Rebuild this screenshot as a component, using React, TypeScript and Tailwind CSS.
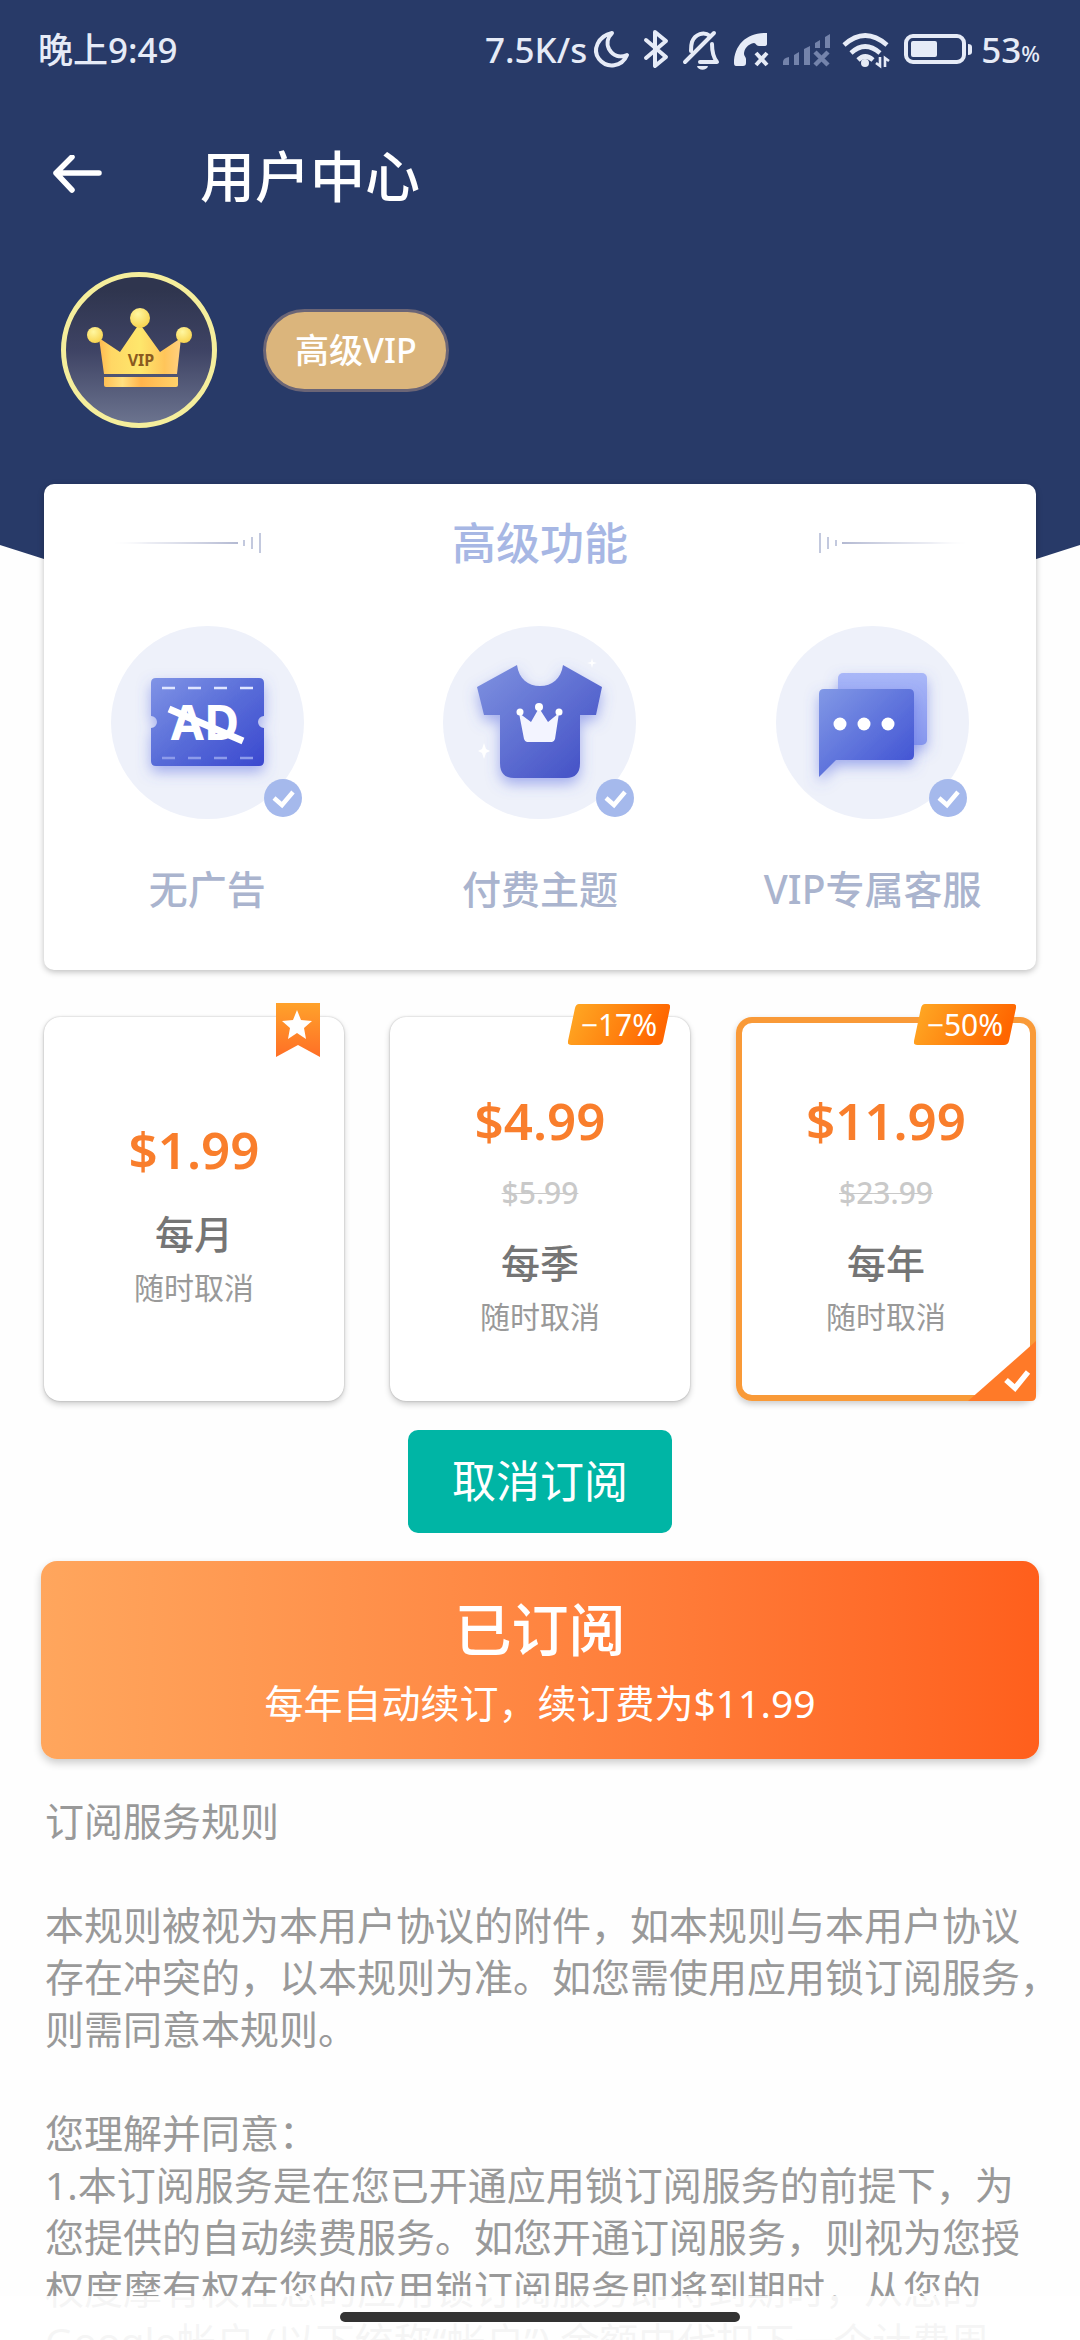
import type { ReactNode } from "react";

type Plan = {
  id: string;
  price: string;
  original?: string;
  name: string;
  discount?: string;
};

const plans: Plan[] = [
  { id: "month", price: "$1.99", name: "每月" },
  { id: "quarter", price: "$4.99", original: "$5.99", name: "每季", discount: "−17%" },
  { id: "year", price: "$11.99", original: "$23.99", name: "每年", discount: "−50%" },
];

function StatusIcons() {
  return (
    <svg className="mr-1.5 ml-1 h-14 w-[384px]" viewBox="590 20 384 56" fill="none" aria-hidden="true">
      <g stroke="#e6ebf7" strokeWidth="4" strokeLinecap="round" strokeLinejoin="round">
        {/* moon */}
        <path d="M611 32C597 35 591 49 598 58c8 10 23 8 28-4-7 3-14 1-18-6-3-6-1-12 3-16z" />
        {/* bluetooth */}
        <path d="M645 39l20 17-11 9V31l11 9-20 17" />
        {/* muted bell */}
        <path d="M684 61l29-29M690 50c0-3 0-6 1-9 3-8 12-11 18-6M711 43c0 8 1 13 5 18H699" />
      </g>
      <path d="M696 65h11c-1 5-10 5-11 0z" fill="#e6ebf7" />
      {/* missed call */}
      <path
        d="M766 32v11q0 2-3 2h-5c-3 0-3-3-5-3-6 1-10 6-10 11 0 2 2 3 2 5v4q0 3-3 3h-7q-2 0-2-3c0-18 13-31 33-30z"
        fill="#e6ebf7"
      />
      <path d="M755 52l11 12m0-12l-11 12" stroke="#e6ebf7" strokeWidth="4" />
      {/* no signal */}
      <path
        d="M782 64v-3q0-4 6-5v8zM793 64V54l5-3v13zM803 64V48l6-3v19zM814 47v-5l5-3v8zM824 47V36l5-3v14z"
        fill="#7483ab"
      />
      <path d="M814 51l13 13m0-13l-13 13" stroke="#7483ab" strokeWidth="4.5" />
      {/* wifi */}
      <path d="M843 44q21-19 43 0M850 52q14-13 29 0M857 59q7-7 15 0" stroke="#e6ebf7" strokeWidth="4.6" />
      <circle cx="864" cy="62" r="4" fill="#e6ebf7" />
      <path d="M879 56v9l-4-3M884 66v-9l4 3" stroke="#e6ebf7" strokeWidth="2.6" />
      {/* battery */}
      <rect x="905" y="35" width="58" height="26" rx="7" stroke="#e6ebf7" strokeWidth="4" />
      <rect x="910" y="40" width="26" height="16" rx="2" fill="#e6ebf7" />
      <path d="M967 43q4 0 4 3v5q0 3-4 3z" fill="#e6ebf7" />
    </svg>
  );
}

function StatusBar() {
  return (
    <div className="flex h-[98px] items-center justify-between pl-[38px] pr-10 text-[35px] leading-none font-medium text-[#e6ebf7]">
      <span>晚上9:49</span>
      <div className="flex items-center">
        <span>7.5K/s</span>
        <StatusIcons />
        <span>53</span>
        <span className="mt-2 text-[22px]">%</span>
      </div>
    </div>
  );
}

function CrownAvatar() {
  return (
    <svg className="size-[156px]" viewBox="0 0 156 156" role="img" aria-label="VIP">
      <defs>
        <linearGradient id="avatar-bg" x1="0" y1="0" x2="0" y2="1">
          <stop offset="0.1" stopColor="#2f354e" />
          <stop offset="0.5" stopColor="#3e4364" />
          <stop offset="1" stopColor="#6d7590" />
        </linearGradient>
        <linearGradient id="gold" x1="0" y1="0" x2="1" y2="0">
          <stop offset="0" stopColor="#ffb850" />
          <stop offset="0.15" stopColor="#ffd765" />
          <stop offset="0.5" stopColor="#fee76c" />
          <stop offset="0.8" stopColor="#ffc55a" />
          <stop offset="1" stopColor="#ffd080" />
        </linearGradient>
        <linearGradient id="gold-band" x1="0" y1="0" x2="1" y2="0">
          <stop offset="0" stopColor="#ffc055" />
          <stop offset="0.25" stopColor="#ffe080" />
          <stop offset="0.5" stopColor="#ffb44c" />
          <stop offset="1" stopColor="#ffd26a" />
        </linearGradient>
        <radialGradient id="pearl" cx="0.4" cy="0.3" r="0.8">
          <stop offset="0" stopColor="#fff7a0" />
          <stop offset="1" stopColor="#f7cf45" />
        </radialGradient>
      </defs>
      <circle cx="78" cy="78" r="75.5" fill="url(#avatar-bg)" stroke="#f5ee9c" strokeWidth="5" />
      <path d="M38 66l21 14 17-25h5l18 25 21-14-4 36H43z" fill="url(#gold)" />
      <path d="M43 105h74v8q0 2-2 2H45q-2 0-2-2z" fill="url(#gold-band)" />
      <circle cx="79" cy="46" r="10" fill="url(#pearl)" />
      <circle cx="34" cy="63" r="8" fill="url(#pearl)" />
      <circle cx="123" cy="63" r="8" fill="url(#pearl)" />
      <text x="80" y="94" textAnchor="middle" fontSize="16" fontWeight="700" fill="#8a5a20">
        VIP
      </text>
    </svg>
  );
}

function TitleRule({ flip = false }: { flip?: boolean }) {
  return (
    <svg className={flip ? "h-5 w-[152px] -scale-x-100" : "h-5 w-[152px]"} viewBox="0 0 152 20" aria-hidden="true">
      <defs>
        <linearGradient id="rule" x1="0" y1="0" x2="1" y2="0">
          <stop offset="0" stopColor="#c3c7dc" stopOpacity="0.1" />
          <stop offset="0.3" stopColor="#c3c7dc" />
          <stop offset="1" stopColor="#b3b9d2" />
        </linearGradient>
      </defs>
      <path d="M0 10l128-1v2z" fill="url(#rule)" />
      <path d="M134 7v6M142 4v12M150 0v20" stroke="#c3c9de" strokeWidth="2" />
    </svg>
  );
}

function AdIcon() {
  return (
    <svg className="size-[193px]" viewBox="0 0 193 193" aria-hidden="true">
      <defs>
        <linearGradient id="ad" x1="0" y1="0" x2="1" y2="1">
          <stop offset="0" stopColor="#8094e6" />
          <stop offset="0.5" stopColor="#586cd8" />
          <stop offset="1" stopColor="#3a48cf" />
        </linearGradient>
        <filter id="glow" x="-30%" y="-30%" width="160%" height="170%">
          <feDropShadow dx="0" dy="6" stdDeviation="7" floodColor="#5468e0" floodOpacity="0.5" />
        </filter>
      </defs>
      <path
        filter="url(#glow)"
        fill="url(#ad)"
        d="M45 52h103q5 0 5 5v33a6 6 0 0 0 0 12v33q0 5-5 5H45q-5 0-5-5v-33a6 6 0 0 0 0-12V57q0-5 5-5z"
      />
      <path d="M51 62h13m13 0h13m13 0h13m13 0h13" stroke="#dfe5ff" strokeWidth="2.5" />
      <path d="M51 132h13m13 0h13m13 0h13m13 0h13" stroke="#8d9bea" strokeWidth="2.5" />
      <text x="94" y="114" textAnchor="middle" fontSize="48" fontWeight="700" fill="#fff">
        AD
      </text>
      <path d="M58 83l74 32" stroke="#fff" strokeWidth="7" />
    </svg>
  );
}

function ShirtIcon() {
  return (
    <svg className="size-[193px]" viewBox="0 0 193 193" aria-hidden="true">
      <defs>
        <linearGradient id="shirt" x1="0" y1="0" x2="1" y2="1">
          <stop offset="0" stopColor="#7f92e0" />
          <stop offset="1" stopColor="#3f4cc4" />
        </linearGradient>
      </defs>
      <path
        filter="url(#glow)"
        fill="url(#shirt)"
        d="M74 39c2 14 11 21 23 21s21-7 23-21l39 22-6 28h-16v48q0 15-14 15H71q-14 0-14-15V89H41l-7-28z"
      />
      <path d="M76 87l12 9 8-14 9 14 11-9-4 26q-1 3-3 3H84q-2 0-3-3z" fill="#f3f4ff" />
      <circle cx="77" cy="86" r="3.5" fill="#fff" />
      <circle cx="96" cy="81" r="4" fill="#fff" />
      <circle cx="116" cy="86" r="3.5" fill="#fff" />
      <path
        d="M41 117l2 6 4 2-4 2-2 6-2-6-4-2 4-2zM149 32l1 4 4 1-4 1-1 4-1-4-4-1 4-1z"
        fill="#fff"
      />
    </svg>
  );
}

function ChatIcon() {
  return (
    <svg className="size-[193px]" viewBox="0 0 193 193" aria-hidden="true">
      <defs>
        <linearGradient id="chat" x1="0" y1="0" x2="1" y2="1">
          <stop offset="0" stopColor="#8299e6" />
          <stop offset="1" stopColor="#3c4ed2" />
        </linearGradient>
        <linearGradient id="chat-back" x1="0" y1="0" x2="0" y2="1">
          <stop offset="0" stopColor="#a9b7f8" />
          <stop offset="1" stopColor="#8797ee" />
        </linearGradient>
      </defs>
      <rect filter="url(#glow)" x="62" y="47" width="89" height="72" rx="5" fill="url(#chat-back)" />
      <path filter="url(#glow)" d="M48 63h85q5 0 5 5v61q0 5-5 5H60l-17 17V68q0-5 5-5z" fill="url(#chat)" />
      <circle cx="64" cy="98" r="6.5" fill="#fff" />
      <circle cx="88" cy="98" r="6.5" fill="#fff" />
      <circle cx="112" cy="98" r="6.5" fill="#fff" />
    </svg>
  );
}

function Feature({ icon, label }: { icon: ReactNode; label: string }) {
  return (
    <li className="flex flex-col items-center gap-10">
      <div className="relative rounded-full bg-[#eef1fa]">
        {icon}
        <svg className="absolute right-0.5 bottom-0.5 size-[38px]" viewBox="0 0 38 38" aria-hidden="true">
          <circle cx="19" cy="19" r="19" fill="#a5b9ec" />
          <path d="M10 19l8 7 11-13" fill="none" stroke="#fff" strokeWidth="4.5" />
        </svg>
      </div>
      <span className="text-[39px] leading-[60px] font-medium text-[#aab4ce]">{label}</span>
    </li>
  );
}

function DiscountTag({ children }: { children: ReactNode }) {
  return (
    <span className="absolute -top-[13px] right-5 flex h-[41px] w-[102px] items-center justify-center">
      <svg className="absolute inset-0 size-full" viewBox="0 0 102 41" aria-hidden="true">
        <defs>
          <linearGradient id="tag" x1="0" y1="0" x2="1" y2="0.2">
            <stop offset="0" stopColor="#ffab25" />
            <stop offset="1" stopColor="#ff6600" />
          </linearGradient>
        </defs>
        <path d="M11 0h88q4 0 3 4l-7 33q-1 4-5 4H3q-4 0-3-4L7 4q1-4 4-4z" fill="url(#tag)" />
      </svg>
      <span className="relative text-[30px] leading-none text-white">{children}</span>
    </span>
  );
}

function PlanCard({ plan, selected }: { plan: Plan; selected: boolean }) {
  return (
    <button
      type="button"
      aria-pressed={selected}
      className={
        selected
          ? "relative flex h-96 flex-col items-center justify-center rounded-2xl bg-white pt-2 shadow-[0_3px_6px_rgba(0,0,0,0.2)] inset-ring-6 inset-ring-[#f99a38]"
          : "relative flex h-96 flex-col items-center justify-center rounded-2xl bg-white pt-2 shadow-[0_3px_6px_rgba(0,0,0,0.2),0_0_2px_rgba(0,0,0,0.25)]"
      }
    >
      <span className="text-[51px] leading-[70px] font-semibold text-[#f97e2c]">{plan.price}</span>
      {plan.original && (
        <s className="mt-[18px] text-[30px] leading-10 font-medium text-[#c9c9c9] decoration-1">{plan.original}</s>
      )}
      <span className="mt-5 text-[39px] leading-[60px] font-medium text-[#757575]">{plan.name}</span>
      <span className="text-[30px] leading-[48px] text-[#999]">随时取消</span>

      {plan.discount ? (
        <DiscountTag>{plan.discount}</DiscountTag>
      ) : (
        <svg className="absolute -top-3.5 right-6 h-[54px] w-11" viewBox="0 0 44 54" aria-hidden="true">
          <defs>
            <linearGradient id="ribbon" x1="0" y1="0" x2="0" y2="1">
              <stop offset="0" stopColor="#ffa22b" />
              <stop offset="1" stopColor="#ff6f26" />
            </linearGradient>
          </defs>
          <path d="M0 0h44v54L22 42 0 54z" fill="url(#ribbon)" />
          <path d="M21 7l4 10 11 1-8 7 2 11-9-6-9 6 2-11-8-7 11-1z" fill="#fff" />
        </svg>
      )}
      {selected && (
        <svg className="absolute right-0 bottom-0 h-[60px] w-[68px]" viewBox="0 0 68 60" aria-hidden="true">
          <path d="M68 0v55q0 5-5 5H0z" fill="#ff7a28" />
          <path d="M38 39l9 8 13-16" fill="none" stroke="#fff" strokeWidth="5.5" />
        </svg>
      )}
    </button>
  );
}

export default function App() {
  return (
    <div
      className="relative h-screen overflow-hidden bg-[#fefefe] font-['Noto_Sans','Noto_Sans_CJK_SC',sans-serif]"
      lang="zh-CN"
    >
      <div className="absolute inset-x-0 top-0 h-[717px] bg-[#283a68] [clip-path:polygon(0_0,100%_0,100%_545px,50%_100%,0_545px)]" />

      <div className="relative h-full overflow-y-auto [scrollbar-width:none]">
        <StatusBar />

        <header className="flex h-[154px] items-center gap-[98px] pl-[52px] text-white">
          <button type="button" aria-label="返回">
            <svg className="h-10 w-[50px]" viewBox="0 0 50 40" fill="none" aria-hidden="true">
              <path
                d="M20 2L4 18l16 17M4 18h43"
                stroke="currentColor"
                strokeWidth="5.5"
                strokeLinecap="round"
                strokeLinejoin="round"
              />
            </svg>
          </button>
          <h1 className="text-[55px] leading-none font-medium">用户中心</h1>
        </header>

        <section className="mt-5 flex items-center gap-[46px] pl-[61px]">
          <CrownAvatar />
          <span className="rounded-full border-3 border-[#6b6576] bg-[#dbb57c] px-[29px] py-4 text-[34px] leading-[45px] font-medium text-white">
            高级VIP
          </span>
        </section>

        <main className="px-11">
          <section className="mt-14 rounded-[10px] bg-white pt-6 pb-[51px] shadow-[0_2px_6px_rgba(0,0,0,0.25)]">
            <div className="flex items-center justify-between px-[66px]">
              <TitleRule />
              <h2 className="text-[44px] leading-[70px] font-medium text-[#a7b7e4]">高级功能</h2>
              <TitleRule flip />
            </div>
            <ul className="mt-12 grid grid-cols-3 gap-1.5">
              <Feature icon={<AdIcon />} label="无广告" />
              <Feature icon={<ShirtIcon />} label="付费主题" />
              <Feature icon={<ChatIcon />} label="VIP专属客服" />
            </ul>
          </section>

          <section className="mt-[47px] grid grid-cols-3 gap-[46px]">
            {plans.map((plan) => (
              <PlanCard key={plan.id} plan={plan} selected={plan.id === "year"} />
            ))}
          </section>

          <div className="mt-[29px] flex justify-center">
            <button
              type="button"
              className="rounded-[10px] bg-[#00b5a5] px-11 py-5 text-[44px] leading-[63px] text-white"
            >
              取消订阅
            </button>
          </div>
        </main>

        <div className="mt-7 px-[41px]">
          <button
            type="button"
            className="flex w-full flex-col items-center gap-1 rounded-2xl bg-linear-to-r from-[#ffa65d] to-[#ff5f1c] pt-7 pb-[26px] text-white shadow-[0_4px_8px_rgba(0,0,0,0.2)]"
          >
            <span className="text-[57px] leading-20 font-medium">已订阅</span>
            <span className="text-[39px] leading-[60px]">每年自动续订，续订费为$11.99</span>
          </button>
        </div>

        <article className="mt-9 pr-5 pl-[45px] text-[39px] leading-[52px] text-[#999]">
          <h3>订阅服务规则</h3>
          <p className="mt-[52px]">
            本规则被视为本用户协议的附件，如本规则与本用户协议
            <br />
            存在冲突的，以本规则为准。如您需使用应用锁订阅服务，
            <br />
            则需同意本规则。
          </p>
          <p className="mt-[52px]">您理解并同意：</p>
          <p>
            1.本订阅服务是在您已开通应用锁订阅服务的前提下，为
            <br />
            您提供的自动续费服务。如您开通订阅服务，则视为您授
            <br />
            权度摩有权在您的应用锁订阅服务即将到期时，从您的
            <br />
            Google帐户 (以下统称“帐户”) 余额中代扣下一个计费周
          </p>
        </article>
      </div>

      {/* system gesture bar */}
      <div className="absolute inset-x-0 bottom-0 flex h-11 justify-center bg-white/90 pt-4">
        <div className="h-2.5 w-[400px] rounded-full bg-[#333]" />
      </div>
    </div>
  );
}
